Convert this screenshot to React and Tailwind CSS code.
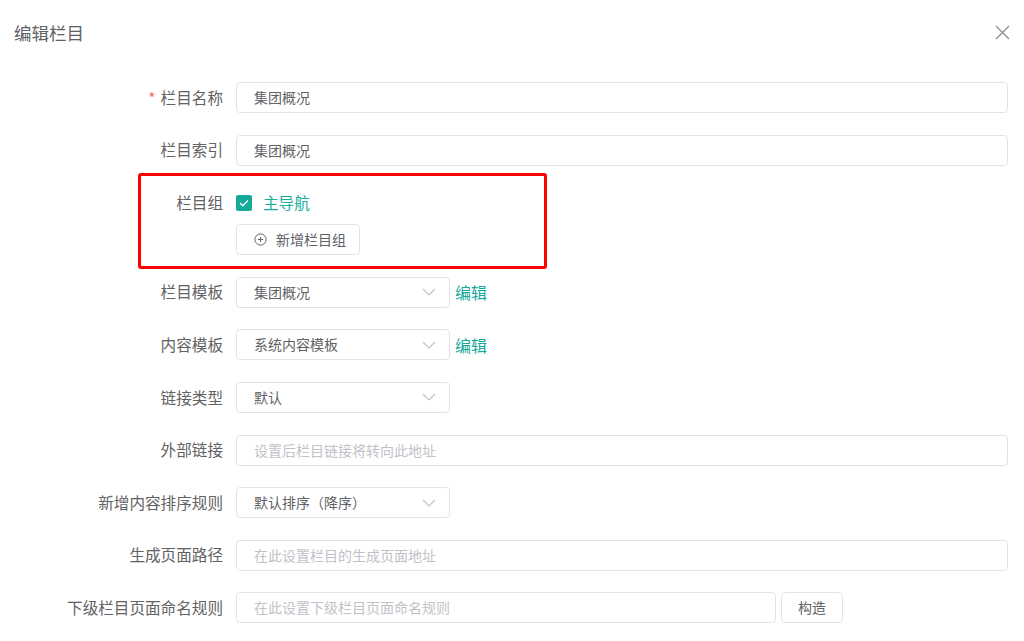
import { useState } from 'react';

const TEAL = '#15a999';

function Chevron() {
  return (
    <svg width="14" height="8" viewBox="0 0 14 8" fill="none" className="shrink-0">
      <path d="M1 1l6 6 6-6" stroke="#c0c4cc" strokeWidth="1.2" />
    </svg>
  );
}

function Row({ label, required, children, last }) {
  return (
    <div className={`flex items-center h-[31px] ${last ? '' : 'mb-[21.6px]'}`}>
      <div className="w-[236px] shrink-0 pr-[13px] text-right text-[15.6px] text-[#606266] leading-none">
        {required && <span className="text-[#f56c6c] mr-[5px]">*</span>}
        {label}
      </div>
      <div className="flex-1 flex items-center h-full">{children}</div>
    </div>
  );
}

function TextInput({ value, placeholder, className = 'flex-1' }) {
  return (
    <div className={`${className} h-full border border-[#e1e3e9] rounded-[4px] flex items-center pl-[17px] text-[14px]`}>
      {value ? (
        <span className="text-[#606266]">{value}</span>
      ) : (
        <span className="text-[#bfc2c8]">{placeholder}</span>
      )}
    </div>
  );
}

function Select({ value }) {
  return (
    <div className="w-[214px] h-full border border-[#e1e3e9] rounded-[4px] flex items-center justify-between pl-[17px] pr-[13px] text-[14px] text-[#606266]">
      <span>{value}</span>
      <Chevron />
    </div>
  );
}

function EditLink() {
  return <span className="ml-[5px] text-[16px] text-[#15a999]">编辑</span>;
}

export default function App() {
  const [checked] = useState(true);

  return (
    <div
      className="w-[1024px] h-[641px] bg-white overflow-hidden relative"
      style={{ fontFamily: '"Noto Sans CJK SC", "Noto Sans", sans-serif' }}
    >
      <div className="flex items-center justify-between pl-[14px] pr-[8px] pt-[19px]">
        <h1 className="text-[17.5px] leading-[24px] text-[#606266]">编辑栏目</h1>
        <button className="p-[6px]">
          <svg width="15" height="15" viewBox="0 0 15 15">
            <path d="M1 1l13 13M14 1L1 14" stroke="#8a8d93" strokeWidth="1.3" />
          </svg>
        </button>
      </div>

      <div className="pr-[16px] mt-[36px]">
        <Row label="栏目名称" required>
          <TextInput value="集团概况" />
        </Row>
        <Row label="栏目索引">
          <TextInput value="集团概况" />
        </Row>

        {/* 栏目组 */}
        <div className="relative mb-[21.6px]">
          <div className="flex items-center h-[31px]">
            <div className="w-[236px] shrink-0 pr-[13px] text-right text-[15.6px] text-[#606266] leading-none">栏目组</div>
            <div className="flex items-center gap-[11px]">
              <span className="w-[16px] h-[16px] rounded-[2px] flex items-center justify-center" style={{ backgroundColor: TEAL }}>
                {checked && (
                  <svg width="10" height="8" viewBox="0 0 10 8" fill="none">
                    <path d="M1 4l2.8 2.8L9 1.5" stroke="white" strokeWidth="1.3" />
                  </svg>
                )}
              </span>
              <span className="text-[15.6px] text-[#1aae9c]">主导航</span>
            </div>
          </div>
          <div className="flex mt-[6px] pl-[236px]">
            <button className="h-[31px] w-[124px] border border-[#e1e3e9] rounded-[4px] flex items-center pl-[17px] gap-[9px] text-[14px] text-[#606266]">
              <svg width="13" height="13" viewBox="0 0 13 13" fill="none">
                <circle cx="6.5" cy="6.5" r="5.6" stroke="#606266" strokeWidth="1" />
                <path d="M6.5 4v5M4 6.5h5" stroke="#606266" strokeWidth="1" />
              </svg>
              新增栏目组
            </button>
          </div>
          <div className="absolute left-[138px] top-[-14px] w-[409px] h-[96px] border-[3px] border-[#ff0000] rounded-[3px] pointer-events-none" />
        </div>

        <Row label="栏目模板">
          <Select value="集团概况" />
          <EditLink />
        </Row>
        <Row label="内容模板">
          <Select value="系统内容模板" />
          <EditLink />
        </Row>
        <Row label="链接类型">
          <Select value="默认" />
        </Row>
        <Row label="外部链接">
          <TextInput placeholder="设置后栏目链接将转向此地址" />
        </Row>
        <Row label="新增内容排序规则">
          <Select value="默认排序（降序）" />
        </Row>
        <Row label="生成页面路径">
          <TextInput placeholder="在此设置栏目的生成页面地址" />
        </Row>
        <Row label="下级栏目页面命名规则" last>
          <TextInput placeholder="在此设置下级栏目页面命名规则" className="w-[540px]" />
          <button className="ml-[5px] h-full w-[62px] border border-[#e1e3e9] rounded-[4px] text-[14px] text-[#606266]">构造</button>
        </Row>
      </div>
    </div>
  );
}
